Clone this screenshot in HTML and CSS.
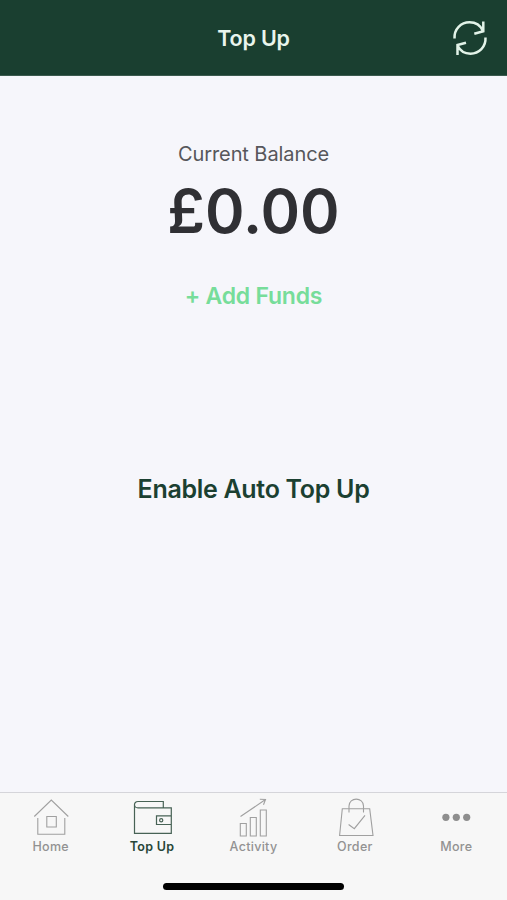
FILE: index.html
```html
<!DOCTYPE html>
<html lang="en">
<head>
<meta charset="utf-8">
<title>Top Up</title>
<link rel="stylesheet" href="styles.css">
</head>
<body>
<div class="app">
  <header class="bar">
    <h1 class="bar-title">Top Up</h1>
    <button class="refresh" aria-label="Refresh">
      <svg width="36" height="36" viewBox="0 0 36 36"><path d="M2.500 18.500C2 9 9 2.300 17.500 2.300C23.500 2.300 28.500 5.500 31 11M31.300 1.500V11.300L22.300 13.700M33.500 17.500C34 27 27 33.700 18.500 33.700C12.500 33.700 8 30.700 5.500 25.500M5.500 35V25L14 22.700"/></svg>
    </button>
  </header>
  <main class="content">
    <p class="label">Current Balance</p>
    <p class="amount">£0.00</p>
    <a class="add">+ Add Funds</a>
    <a class="auto">Enable Auto Top Up</a>
  </main>
  <nav class="tabs">
    <a class="tab">
      <svg width="40" height="40" viewBox="0 0 40 40"><path d="M3.300 19.500L20.300 3L37.300 19.500M6.800 21V37.300H33.800V21M15.800 19.500H25.300V30H15.800Z"/></svg>
      <span>Home</span>
    </a>
    <a class="tab active">
      <svg width="40" height="40" viewBox="0 0 40 40"><path d="M2.500 7.500V36.300H39.300V10.800H6C1.300 10.800 1.300 4.500 6 4.500H31.300V10.800M39.300 18.800H24.500V27.500H39.300"/><circle cx="29.200" cy="23.200" r="1.600"/></svg>
      <span>Top Up</span>
    </a>
    <a class="tab">
      <svg width="40" height="40" viewBox="0 0 40 40"><path d="M7.300 26.500H13.300V39H7.300ZM17.300 20.500H23.300V39H17.300ZM27.300 13H33.300V39H27.300ZM7.500 19.500L32.500 2.500M26.800 2.300L32.500 2.500L30.500 7.700"/></svg>
      <span>Activity</span>
    </a>
    <a class="tab">
      <svg width="40" height="40" viewBox="0 0 40 40"><path d="M7.300 11.700H34.700L38 38.500H4.600ZM14 15.500V9C14 -.2 28.500 -.2 28.500 9V15.500M13.600 27.500L19.300 31.700L30 18.300"/></svg>
      <span>Order</span>
    </a>
    <a class="tab">
      <svg class="dots" width="40" height="40" viewBox="0 0 40 40"><circle cx="9.900" cy="20.300" r="3.600"/><circle cx="20.300" cy="20.300" r="3.600"/><circle cx="30.700" cy="20.300" r="3.600"/></svg>
      <span>More</span>
    </a>
  </nav>
  <footer class="home-area"><div class="indicator"></div></footer>
</div>
</body>
</html>
```
FILE: styles.css
```css
* { box-sizing: border-box; }
body {
  margin: 0;
  font-family: Inter, "Liberation Sans", sans-serif;
  background: #f6f6fb;
}
h1, p { margin: 0; }
.app { display: flex; flex-direction: column; height: 900px; }
.bar {
  display: grid;
  grid-template-columns: 1fr auto 1fr;
  align-items: center;
  height: 76px;
  background: #1a3f30;
  border-bottom: 1px solid #3b5a4e;
}
.bar-title {
  grid-column: 2;
  font-size: 21.5px;
  line-height: 28px;
  font-weight: 600;
  letter-spacing: -0.2px;
  color: #e9f5ed;
}
.refresh {
  justify-self: end;
  width: 36px;
  height: 36px;
  margin-right: 19px;
  padding: 0;
  border: 0;
  background: none;
}
.refresh svg { display: block; fill: none; stroke: #e2f3e8; stroke-width: 2.5; }
.content {
  flex: 1;
  display: flex;
  flex-direction: column;
  align-items: center;
  padding-top: 65px;
  white-space: nowrap;
}
.label { font-size: 20px; line-height: 26px; letter-spacing: -0.08px; color: #57575b; }
.amount {
  margin-top: 8px;
  font-size: 60px;
  line-height: 72px;
  font-weight: 600;
  color: #303034;
}
.add {
  margin-top: 34px;
  font-size: 23px;
  line-height: 30px;
  font-weight: 600;
  letter-spacing: -0.25px;
  color: #77dd9a;
}
.auto {
  margin-top: 161px;
  font-size: 25px;
  line-height: 34px;
  font-weight: 600;
  letter-spacing: -0.3px;
  color: #1b4031;
}
.tabs {
  display: grid;
  grid-template-columns: repeat(5, 1fr);
  height: 69px;
  padding-top: 4px;
  background: #f7f7f7;
  border-top: 1px solid #d5d5da;
}
.tab {
  display: flex;
  flex-direction: column;
  align-items: center;
  font-size: 12.5px;
  line-height: 20px;
  letter-spacing: 0.3px;
  font-weight: 500;
  color: #929292;
}
.tab svg { display: block; fill: none; stroke: #a0a0a0; stroke-width: 1.1; }
.tab .dots { fill: #8e8e8e; stroke: none; }
.active { color: #274638; font-weight: 600; }
.active svg { stroke: #476255; stroke-width: 1.2; }
.home-area { height: 39px; padding-top: 22px; background: #f7f7f7; }
.indicator { width: 181px; height: 7px; margin: 0 auto; border-radius: 4px; background: #000; }
```
